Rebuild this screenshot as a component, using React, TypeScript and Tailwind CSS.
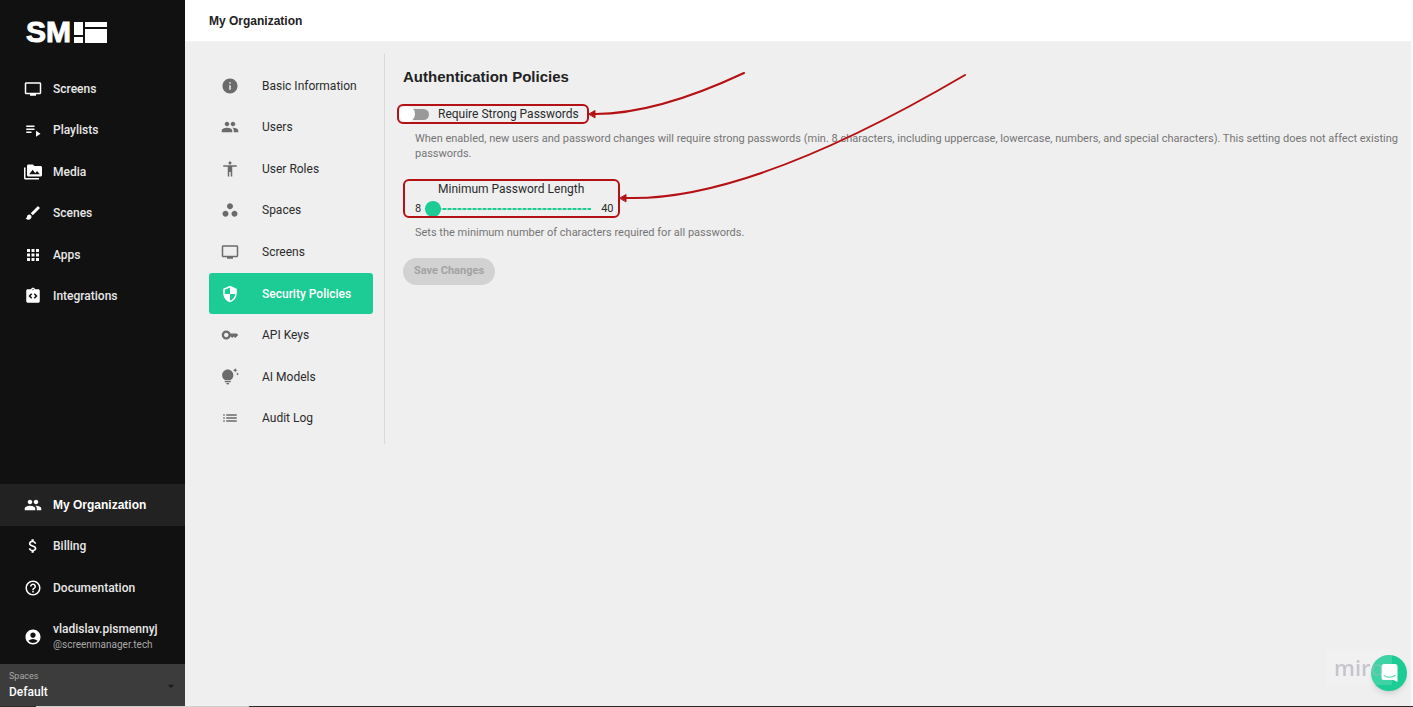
import type { IconType } from "react-icons";
import {
  MdAccessibility,
  MdAccountCircle,
  MdApps,
  MdArrowDropDown,
  MdAttachMoney,
  MdBrush,
  MdHelpOutline,
  MdInfo,
  MdIntegrationInstructions,
  MdKey,
  MdList,
  MdPeople,
  MdPermMedia,
  MdPlaylistPlay,
  MdSecurity,
  MdTipsAndUpdates,
  MdTv,
  MdWorkspaces,
} from "react-icons/md";

type Item = { label: string; icon: IconType; active?: boolean };

const mainLinks: Item[] = [
  { label: "Screens", icon: MdTv },
  { label: "Playlists", icon: MdPlaylistPlay },
  { label: "Media", icon: MdPermMedia },
  { label: "Scenes", icon: MdBrush },
  { label: "Apps", icon: MdApps },
  { label: "Integrations", icon: MdIntegrationInstructions },
];

const accountLinks: Item[] = [
  { label: "My Organization", icon: MdPeople, active: true },
  { label: "Billing", icon: MdAttachMoney },
  { label: "Documentation", icon: MdHelpOutline },
];

const settingsLinks: Item[] = [
  { label: "Basic Information", icon: MdInfo },
  { label: "Users", icon: MdPeople },
  { label: "User Roles", icon: MdAccessibility },
  { label: "Spaces", icon: MdWorkspaces },
  { label: "Screens", icon: MdTv },
  { label: "Security Policies", icon: MdSecurity, active: true },
  { label: "API Keys", icon: MdKey },
  { label: "AI Models", icon: MdTipsAndUpdates },
  { label: "Audit Log", icon: MdList },
];

function SidebarLink({ label, icon: Icon, active }: Item) {
  return (
    <a
      href="#"
      className={
        active
          ? "flex items-center gap-[11px] bg-[#222222] pl-6 font-['Liberation_Sans',sans-serif] text-xs font-bold text-white"
          : "flex items-center gap-[11px] pl-6 text-xs font-medium text-[#e8e8e8]"
      }
    >
      <Icon size={18} className="text-white" />
      {label}
    </a>
  );
}

function Sidebar() {
  return (
    <aside className="flex w-[185px] shrink-0 flex-col bg-[#111111]">
      <a href="#" aria-label="SM home" className="flex h-16 items-center gap-[3px] pl-[26px] font-['Liberation_Sans',sans-serif] text-[30px] leading-none font-bold text-white [-webkit-text-stroke:1px_white]">
        SM
        <svg width="33" height="21" viewBox="0 0 33 21" fill="currentColor">
          <path d="M0 0h9v13H0zM0 15h9v6H0zM11 0h22v5H11zM11 7h22v14H11z" />
        </svg>
      </a>
      <nav className="mt-1 grid h-[249px] auto-rows-fr">
        {mainLinks.map(item => <SidebarLink key={item.label} {...item} />)}
      </nav>

      <nav className="mt-auto grid h-[125px] auto-rows-fr">
        {accountLinks.map(item => <SidebarLink key={item.label} {...item} />)}
      </nav>
      <a href="#" className="flex h-[55px] items-center gap-[11px] pl-6">
        <MdAccountCircle size={18} className="text-white" />
        <span>
          <span className="block text-xs font-medium text-[#e8e8e8]">vladislav.pismennyj</span>
          <span className="block text-[10px] leading-4 text-[#a8a8a8]">@screenmanager.tech</span>
        </span>
      </a>
      <div className="relative h-[42px] bg-[#3c3c3c] px-[9px] pt-1">
        <label htmlFor="space" className="block text-[9px] leading-4 text-[#a8a8a8]">Spaces</label>
        <select id="space" className="block w-full appearance-none bg-transparent text-xs leading-4 font-medium text-white">
          <option>Default</option>
        </select>
        <MdArrowDropDown size={16} className="pointer-events-none absolute right-1.5 bottom-3 text-[#1c1c1c]" />
      </div>
    </aside>
  );
}

function SettingsNav() {
  return (
    <nav className="mt-3 w-[200px] shrink-0 border-r border-[#d9d9d9] pt-[11px] pr-[11px] pb-[5px] pl-6">
      <div className="grid h-[374px] auto-rows-fr">
        {settingsLinks.map(({ label, icon: Icon, active }) => (
          <a
            key={label}
            href="#"
            className={
              active
                ? "flex items-center gap-[23px] rounded-[3px] bg-[#1dcb94] pl-3 text-xs font-medium text-white"
                : "flex items-center gap-[23px] pl-3 text-xs text-[#2b2b2b]"
            }
          >
            <Icon size={18} className={active ? "text-white" : "text-[#6b6b6b]"} />
            {label}
          </a>
        ))}
      </div>
    </nav>
  );
}

function Policies() {
  return (
    <section className="min-w-0 flex-1 pt-[23px] pr-1.5 pl-[18px]">
      <h2 className="font-['Liberation_Sans',sans-serif] text-[15px] leading-6 font-bold text-[#222222]">Authentication Policies</h2>

      <div className="relative mt-[13px] w-fit">
        <label className="flex h-6 items-center text-xs text-[#2b2b2b]">
          <span className="relative mr-2 flex w-[27px] items-center">
            <input
              type="checkbox"
              role="switch"
              className="ml-1 h-[11px] w-[22px] appearance-none rounded-full bg-[#999999]"
            />
            <span className="pointer-events-none absolute -left-1 size-4 rounded-full bg-white" />
          </span>
          Require Strong Passwords
        </label>
        <div className="pointer-events-none absolute inset-y-0.5 -right-2.5 -left-1.5 rounded-md border-2 border-[#b51014]" />
        <svg className="pointer-events-none absolute -top-[30px] left-full ml-2.5 text-[#b51014]" width="156" height="50" viewBox="0 0 156 50" fill="none" stroke="currentColor" strokeWidth="2" strokeLinecap="round">
          <path d="M155 1C108 23 55 42 6 42" />
          <path d="M0 42L6 38.5V45.5Z" fill="currentColor" strokeWidth="1" />
        </svg>
      </div>
      <p className="mt-[5px] pl-3 text-[11px] leading-[15px] text-[#757575]">
        When enabled, new users and password changes will require strong passwords (min. 8 characters, including uppercase,
        lowercase, numbers, and special characters). This setting does not affect existing passwords.
      </p>

      <div className="relative mt-[18px] h-[39px] w-[217px]">
        <label htmlFor="min-length" className="block pt-0.5 pl-[35px] text-xs leading-4 text-[#2b2b2b]">
          Minimum Password Length
        </label>
        <div className="flex h-6 items-center pl-3 text-[11px] text-[#2b2b2b]">
          <span>8</span>
          <span className="relative mx-1 flex w-[166px] items-center">
            <span className="absolute right-0 left-2 h-0.5 bg-[repeating-linear-gradient(90deg,#1dcb94_0_3px,#8fdcc1_3px_5px)]" />
            <input
              id="min-length"
              type="range"
              min={8}
              max={40}
              defaultValue={8}
              className="relative h-4 w-full appearance-none bg-transparent [&::-webkit-slider-thumb]:size-4 [&::-webkit-slider-thumb]:appearance-none [&::-webkit-slider-thumb]:rounded-full [&::-webkit-slider-thumb]:bg-[#1dcb94]"
            />
          </span>
          <span className="ml-1.5">40</span>
        </div>
        <div className="pointer-events-none absolute inset-0 rounded-md border-2 border-[#b51014]" />
        <svg className="pointer-events-none absolute -top-[106px] left-full text-[#b51014]" width="348" height="132" viewBox="0 0 348 132" fill="none" stroke="currentColor" strokeWidth="2" strokeLinecap="round">
          <path d="M345 2C236 66 106 128 6 125" />
          <path d="M0 125L6 121.5V128.5Z" fill="currentColor" strokeWidth="1" />
        </svg>
      </div>
      <p className="mt-[7px] pl-3 text-[11px] leading-[15px] text-[#757575]">
        Sets the minimum number of characters required for all passwords.
      </p>

      <button type="button" disabled className="mt-[18px] h-[27px] rounded-full bg-[#d2d2d2] px-[11px] text-[11px] font-bold text-[#a3a3a3]">
        Save Changes
      </button>
    </section>
  );
}

export default function App() {
  return (
    <div className="flex min-h-screen flex-col bg-[#efefef] font-['Roboto','Liberation_Sans',sans-serif]">
      <div className="flex flex-1">
        <Sidebar />
        <main className="flex min-w-0 flex-1 flex-col border-r-2 border-[#fafafa]">
          <header className="flex h-[42px] items-center border-b border-[#f3f3f3] bg-white pl-6">
            <h1 className="font-['Liberation_Sans',sans-serif] text-xs font-bold text-[#222222]">My Organization</h1>
          </header>
          <div className="flex items-start">
            <SettingsNav />
            <Policies />
          </div>
        </main>
      </div>

      {/* Window edge */}
      <div className="flex h-px bg-[#2b2b24]">
        <div className="ml-9 w-[213px] bg-[#cfcfcf]" />
      </div>

      {/* Chat launcher */}
      <button type="button" aria-label="Open chat" className="fixed right-1.5 bottom-4 flex size-9 items-center justify-center rounded-full bg-[#1dcb94] shadow-md">
        <svg width="17" height="18" viewBox="0 0 17 18" fill="none">
          <path d="M3 0h11a2.500 2.500 0 0 1 2.500 2.500V18l-4-2H3A2.500 2.500 0 0 1 .5 13.500v-11A2.500 2.500 0 0 1 3 0z" fill="#fff" />
          <path d="M3 11.500c3.200 2.300 7.800 2.300 11 0" stroke="#1dcb94" strokeLinecap="round" />
        </svg>
      </button>
      <div className="pointer-events-none fixed right-[21px] bottom-[22px] flex h-9 w-[66px] items-center justify-center bg-white/15 font-['Open_Sans',sans-serif] text-[22px] font-semibold text-[#b9b9c4]/80">
        <span>mir<span className="opacity-40">o</span></span>
      </div>
    </div>
  );
}
